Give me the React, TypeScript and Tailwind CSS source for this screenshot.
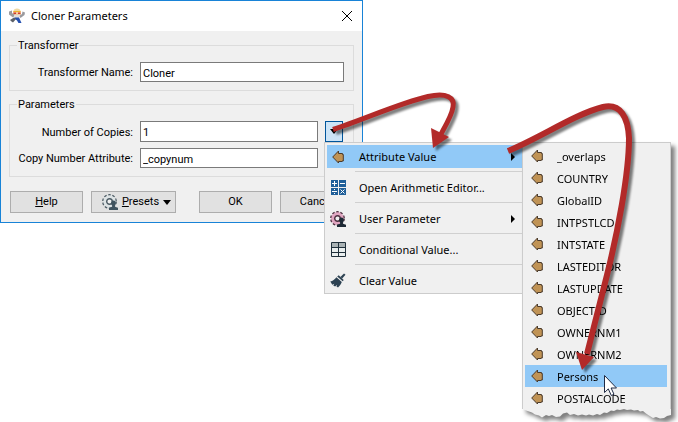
import { useState } from "react";

const attributes = [
  "_overlaps",
  "COUNTRY",
  "GlobalID",
  "INTPSTLCD",
  "INTSTATE",
  "LASTEDITOR",
  "LASTUPDATE",
  "OBJECTID",
  "OWNERNM1",
  "OWNERNM2",
  "Persons",
  "POSTALCODE",
];

const AttributeIcon = () => (
  <svg width="12" height="14" viewBox="0 0 12 14" className="shrink-0">
    <path
      d="M.7 7L6.5 1v2.5h4v1h.8v6.5h-1.3v.5H6.5V13z"
      fill="#c09355"
      stroke="#4b3a2a"
      strokeWidth="1"
    />
  </svg>
);

const MathIcon = () => (
  <svg width="15" height="15" viewBox="0 0 15 15">
    <path d="M0 0h7v7H0zM8 0h7v7H8zM0 8h7v7H0zM8 8h7v7H8z" fill="#1f5f99" />
    <path
      d="M1 3.5h5M3.5 1v5M9 3.5h5M1 11.5h5M3 9.5h1M3 13.5h1M9.5 9.5l4 4M13.5 9.5l-4 4"
      stroke="#fff"
      strokeWidth="1"
    />
  </svg>
);

const GearUserIcon = ({ tone }: { tone: "pink" | "gray" }) => {
  const line = tone === "pink" ? "#4c2f3f" : "#4b5a63";
  const fill = tone === "pink" ? "#e0a6c1" : "#dde3e5";
  return (
    <svg width="16" height="16" viewBox="0 0 16 16" className="shrink-0">
      <circle
        cx="7.5"
        cy="7.5"
        r="6.3"
        fill={fill}
        stroke={line}
        strokeWidth="2.2"
        strokeDasharray="2.4 1.558"
      />
      <circle cx="7.5" cy="7.5" r="5" fill="none" stroke={fill} strokeWidth="2.4" />
      <circle cx="7.5" cy="7.5" r="2.8" fill="#f0f0f0" stroke={line} strokeWidth="1.4" />
      <path
        d="M11.5 6.5c1.5 0 2.4 1 2.4 2.5 0 1.1-.4 1.900-1 2.4v1.3l3.1 1.1V16H7v-2.2l3.1-1.1v-1.3c-.6-.5-1-1.300-1-2.4 0-1.500.9-2.500 2.400-2.500z"
        fill={tone === "pink" ? "#1d2a35" : "#40535f"}
      />
    </svg>
  );
};

const TableIcon = () => (
  <svg width="15" height="15" viewBox="0 0 15 15">
    <path d="M0 0h15v15H0z" fill="#e9eeee" />
    <path d="M1 1h13v4H1z" fill="#a9b2b4" />
    <path
      d="M.5.5h14v14H.5zM.5 5.5h14M.5 10.5h14M7.5.5v14"
      fill="none"
      stroke="#1f2f3a"
    />
  </svg>
);

const BrushIcon = () => (
  <svg width="16" height="15" viewBox="0 0 16 15">
    <path d="M14 .5l1.5 1.3-3.3 3.7-1.8-1.5z" fill="#2d4252" />
    <path d="M8.7 2.3l5 4.7-1 1.3-5.5-4.8z" fill="#2d4252" />
    <path
      d="M6.4 4.3l5.4 4.7c-.8 2-2 4-3.8 5.5l-1.5-1 .6-1.8-2 1.8-1.8-1 1-1.8-2 1L.3 8.5c2.4-.4 4.5-1.9 6.1-4.2z"
      fill="#2d4252"
    />
  </svg>
);

const RobotIcon = () => (
  <svg width="16" height="16" viewBox="0 0 16 16">
    <path d="M4 4C4.5 1.5 6 .5 8 .5s3.500 1 4 3.500z" fill="#efd9a4" />
    <path d="M4 3h8v4.5H4z" fill="#f1c9a2" />
    <path d="M4.5 3h7v1h-7z" fill="#f0b429" />
    <path d="M4.5 4.5H7V6H4.5zM9 4.5h2.5V6H9z" fill="#cf3b2c" />
    <path
      d="M0 3.5l3-1V5l3 2-2 2.5L0 6.5zM16 4.5l-2.5-1L13 6l-3 2 1.5 2L15.5 7z"
      fill="#9a9a9e"
    />
    <path d="M5 7h6l-1 3.5H5.5z" fill="#e3ddd8" />
    <path d="M5.5 9.5H10l2.5 5.5H9.5L8 12.5 6 11z" fill="#2450b0" />
    <path d="M1 12l4-2.5L7 11l-3 3.5-1.5-1z" fill="#5c6068" />
  </svg>
);

const RightTriangle = () => (
  <svg width="4" height="8" viewBox="0 0 4 8">
    <path d="M0 0l4 4-4 4z" fill="#000" />
  </svg>
);

const DownTriangle = () => (
  <svg width="8" height="5" viewBox="0 0 8 5">
    <path d="M0 0h8L4 5z" fill="#000" />
  </svg>
);

const menuItems = [
  { label: "Attribute Value", icon: <AttributeIcon />, sub: true },
  { label: "Open Arithmetic Editor...", icon: <MathIcon />, sub: false },
  { label: "User Parameter", icon: <GearUserIcon tone="pink" />, sub: true },
  { label: "Conditional Value...", icon: <TableIcon />, sub: false },
  { label: "Clear Value", icon: <BrushIcon />, sub: false },
];

const AttributeMenu = () => {
  const [selected, setSelected] = useState("Persons");
  return (
    <div className="absolute -top-[3px] left-full z-10 w-[149px] drop-shadow-[4px_4px_2px_rgba(0,0,0,0.5)]">
      <ul className="border border-b-0 border-[#cccccc] bg-[#f0f0f0] pt-0.5 pr-[3px] pl-0.5">
        {attributes.map((name) => (
          <li key={name}>
            <button
              onClick={() => setSelected(name)}
              className={`flex h-[22px] w-full items-center gap-3.5 pl-1.5 text-left ${
                selected === name ? "bg-[#91c9f7]" : ""
              }`}
            >
              <AttributeIcon />
              <span className="pt-0.5">{name}</span>
            </button>
          </li>
        ))}
      </ul>
      {/* torn paper edge */}
      <svg width="149" height="10" viewBox="0 0 149 10" className="block">
        <path
          d="M0 0h149v6l-4 1-3 2-4 .5-4-1.5-3 1-4-2.5-3-2-3-2.5-3 .5-2-1.5-4 .5-3-1-4 .5-3-1-4 1-3-.5-3 1.500-3-.5-4 2.500-3-.5-4 2.500-3-1-4 1.500-4-1-3 1-4-1-4 1-4-1.500-4 1-3-2.500-4 1-3 3-4 .5-4-2-3 1-3-1-4 2.500-3-2-4-1-3-2z"
          fill="#f0f0f0"
        />
      </svg>
    </div>
  );
};

const ValueMenu = () => (
  <ul className="absolute top-full -left-px z-10 w-[199px] border border-[#cccccc] bg-[#f0f0f0] pt-0.5 pb-px pl-0.5 font-['Noto_Sans',sans-serif] text-[11px]">
    {menuItems.map((item, i) => (
      <li key={item.label} className="relative">
        {i > 0 && <div className="mt-[3px] mb-1 ml-7 border-t border-[#d0d0d0]" />}
        <button
          className={`flex h-[23px] w-full items-center pr-[7px] text-left ${
            i === 0 ? "bg-[#91c9f7]" : ""
          }`}
        >
          <span className="mr-[13px] ml-[3px] flex w-4 justify-center">
            {item.icon}
          </span>
          <span className="flex-1 whitespace-nowrap">{item.label}</span>
          {item.sub && <RightTriangle />}
        </button>
        {i === 0 && <AttributeMenu />}
      </li>
    ))}
  </ul>
);

const Arrows = () => (
  <svg
    width="678"
    height="422"
    viewBox="0 0 678 422"
    className="pointer-events-none absolute top-0 left-0 z-20"
  >
    <g
      fill="none"
      stroke="#b22a29"
      strokeWidth="6"
      className="drop-shadow-[3px_3px_1px_rgba(0,0,0,0.5)]"
    >
      <path
        d="M333 129.500C365 119 400 103 428 96.500 447 92 455 98 453 107 452 115 446 125 441 134"
        strokeWidth="5"
      />
      <path d="M431 128l18 9-16 11z" fill="#b22a29" stroke="none" />
      <path d="M508 151C540 138 575 114 603 107 621 103 628 118 629 138 629 175 617 235 607 275L587 354" />
      <path d="M576 352l18 5-12 13z" fill="#b22a29" stroke="none" />
    </g>
    <path
      d="M604.5 375.5v17l3.8-3.6 3 6.600 2.700-1.200-2.900-6.300h5.400z"
      fill="#fff"
      stroke="#1f2a44"
      strokeWidth="1"
    />
  </svg>
);

const labelClass = "w-[130px] pt-0.5 pr-[7px] text-right whitespace-nowrap";
const fieldClass =
  "min-w-0 flex-1 border border-[#7a7a7a] bg-white px-0.5 pt-0.5 outline-none";
const groupClass = "border border-[#dcdcdc] pt-2 pr-[9px] pb-2";
const legendClass = "ml-[7px] px-px pt-0.5";
const buttonClass =
  "flex h-[22px] items-center justify-center border border-[#adadad] bg-[#e1e1e1]";

const App = () => {
  const [name, setName] = useState("Cloner");
  const [copies, setCopies] = useState("1");
  const [attribute, setAttribute] = useState("_copynum");
  const [menuOpen, setMenuOpen] = useState(true);

  return (
    <div className="relative min-h-screen overflow-hidden bg-white text-black">
      <div className="w-full max-w-[363px] border border-[#1883d7] bg-[#f0f0f0] font-['Roboto',sans-serif] text-[11px] leading-4">
        <div className="flex h-[30px] items-center gap-1.5 bg-white pr-2.5 pl-2 font-['Noto_Sans',sans-serif]">
          <RobotIcon />
          <h1 className="flex-1">Cloner Parameters</h1>
          <button aria-label="Close">
            <svg width="10" height="10" viewBox="0 0 10 10">
              <path d="M0 0l10 10M10 0L0 10" stroke="#000" />
            </svg>
          </button>
        </div>

        <div className="flex flex-col gap-1 px-2 pt-[5px]">
          <fieldset className={groupClass}>
            <legend className={legendClass}>Transformer</legend>
            <div className="flex items-center">
              <label htmlFor="name" className={labelClass}>
                Transformer Name:
              </label>
              <input
                id="name"
                value={name}
                onChange={(e) => setName(e.target.value)}
                className={`h-5 ${fieldClass}`}
              />
            </div>
          </fieldset>

          <fieldset className={groupClass}>
            <legend className={legendClass}>Parameters</legend>
            <div className="flex flex-col gap-1.5">
              <div className="flex items-center">
                <label htmlFor="copies" className={labelClass}>
                  Number of Copies:
                </label>
                <input
                  id="copies"
                  value={copies}
                  onChange={(e) => setCopies(e.target.value)}
                  className={`h-[21px] ${fieldClass}`}
                />
                <div className="relative mr-px ml-[7px]">
                  <button
                    aria-label="Value options"
                    onClick={() => setMenuOpen(!menuOpen)}
                    className="flex h-[21px] w-[18px] items-center justify-center border border-[#00559b] bg-[#cce4f7]"
                  >
                    <DownTriangle />
                  </button>
                  {menuOpen && <ValueMenu />}
                </div>
              </div>
              <div className="flex items-center pr-[26px]">
                <label htmlFor="attribute" className={labelClass}>
                  Copy Number Attribute:
                </label>
                <input
                  id="attribute"
                  value={attribute}
                  onChange={(e) => setAttribute(e.target.value)}
                  className={`h-5 ${fieldClass}`}
                />
              </div>
            </div>
          </fieldset>
        </div>

        <div className="flex gap-2 px-[9px] pt-3.5 pb-[9px]">
          <button className={`w-[73px] ${buttonClass}`}>
            <span>
              <u>H</u>elp
            </span>
          </button>
          <button className={`w-[85px] gap-1 pl-1.5 ${buttonClass}`}>
            <GearUserIcon tone="gray" />
            <span>
              <u>P</u>resets
            </span>
            <DownTriangle />
          </button>
          <button className={`ml-auto w-[73px] ${buttonClass}`}>OK</button>
          <button className={`w-[73px] ${buttonClass}`}>Cancel</button>
        </div>
      </div>

      <Arrows />
    </div>
  );
};

export default App;
